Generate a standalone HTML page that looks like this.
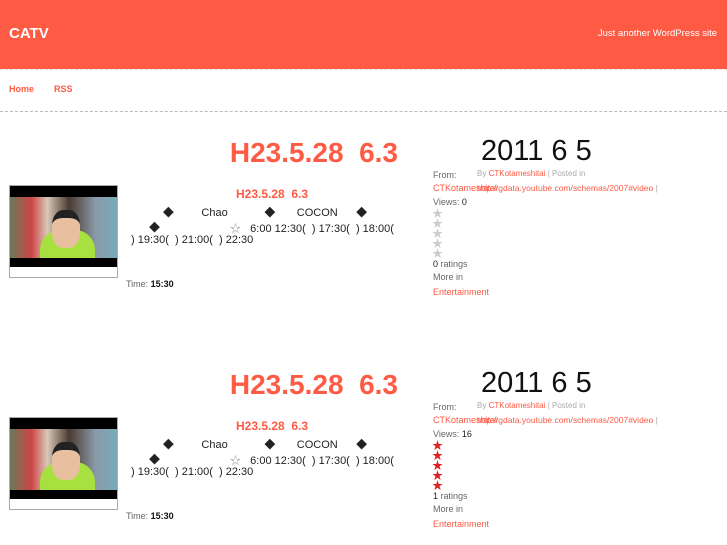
<!DOCTYPE html>
<html><head><meta charset="utf-8"><style>
*{margin:0;padding:0}
body{width:727px;height:545px;overflow:hidden;background:#fff;font-family:"Liberation Sans","Noto Sans CJK JP",sans-serif;position:relative}
.a{position:absolute;white-space:nowrap}
#hd{position:absolute;left:0;top:0;width:727px;height:69px;background:#ff5a43}
.dash{position:absolute;left:0;width:727px;border-top:1px dashed #bbb}
.r{color:#ff5a43}
.g{color:#666}
.thumb{position:absolute;left:9px;width:107px;height:91px;border:1px solid #aaa;background:#fff}
.thumb .bk{position:absolute;left:0;top:0;width:107px;height:81px;background:#000}
.thumb .im{position:absolute;left:0;top:11px;width:107px;height:61px;background:linear-gradient(90deg,#6a7a5a 0%,#c44 20%,#d8c8b8 35%,#4a3a30 55%,#8a9aa8 80%,#7ab 100%)}
.thumb .sh{position:absolute;left:30px;top:33px;width:55px;height:28px;background:#a8e040;border-radius:20px 20px 0 0}
.thumb .fc{position:absolute;left:42px;top:13px;width:28px;height:30px;background:#e8c0a0;border-radius:40%;border-top:8px solid #222}
.star{font-size:11px;line-height:10px;height:10px}
</style></head><body>
<div id="hd"></div>
<div class="a" style="left:9px;top:25px;color:#fff;font-size:15px;font-weight:bold">CATV</div>
<div class="a" style="right:10px;top:28px;color:#fff;font-size:9.5px">Just another WordPress site</div>
<div class="dash" style="top:69px;border-top-color:#ddd"></div>
<div class="a r" style="left:9px;top:84px;font-size:9px;font-weight:bold">Home</div>
<div class="a r" style="left:54px;top:84px;font-size:9px;font-weight:bold">RSS</div>
<div class="dash" style="top:111px"></div>

<div style="position:absolute;left:0;top:0;width:727px;height:300px">
<div class="a r" style="right:329px;top:137px;font-size:28px;font-weight:bold">H23.5.28&nbsp; 6.3</div>
<div class="thumb" style="top:185px"><div class="bk"></div><div class="im"><div class="sh"></div><div class="fc"></div></div></div>
<div class="a r" style="left:236px;top:187px;font-size:12px;font-weight:bold">H23.5.28&nbsp; 6.3</div>
<div class="a" style="left:130px;top:206px;font-size:11px;line-height:14px;width:270px;white-space:normal;text-align:center;color:#222">◆&nbsp;&nbsp;&nbsp;&nbsp;&nbsp;&nbsp;&nbsp;&nbsp;&nbsp;Chao&nbsp;&nbsp;&nbsp;&nbsp;&nbsp;&nbsp;&nbsp;&nbsp;&nbsp;&nbsp;&nbsp;&nbsp;◆&nbsp;&nbsp;&nbsp;&nbsp;&nbsp;&nbsp;&nbsp;COCON&nbsp;&nbsp;&nbsp;&nbsp;&nbsp;&nbsp;◆</div>
<div class="a" style="left:149px;top:219px;font-size:11px;color:#222">◆</div>
<div class="a" style="left:230px;top:220px;font-size:11px;color:#222"><span style="color:#999">☆</span>&nbsp;&nbsp;&nbsp;6:00 12:30(&nbsp; ) 17:30(&nbsp; ) 18:00(</div>
<div class="a" style="left:131px;top:234px;font-size:11px;color:#222">) 19:30(&nbsp; ) 21:00(&nbsp; ) 22:30</div>
<div class="a" style="left:126px;top:279px;font-size:9px;color:#666">Time: <b style="color:#111">15:30</b></div>
<div class="a" style="left:481px;top:135px;font-size:29px;color:#111">2011 6 5</div>
<div class="a g" style="left:433px;top:170px;font-size:9px">From:</div>
<div class="a" style="left:477px;top:169px;font-size:8px;color:#aaa">By <span class="r">CTKotameshitai</span> | Posted in</div>
<div class="a r" style="left:433px;top:183px;font-size:9px">CTKotameshitai</div>
<div class="a" style="left:477px;top:183px;font-size:8.5px;color:#aaa"><span class="r">http://gdata.youtube.com/schemas/2007#video</span> |</div>
<div class="a g" style="left:433px;top:197px;font-size:9px">Views: <span style="color:#222">0</span></div>
<div class="a star" style="left:432px;top:209px;color:#ccc">★<br>★<br>★<br>★<br>★</div>
<div class="a g" style="left:433px;top:259px;font-size:9px"><span style="color:#222">0</span> ratings</div>
<div class="a g" style="left:433px;top:272px;font-size:9px">More in</div>
<div class="a r" style="left:433px;top:287px;font-size:9px">Entertainment</div>
</div>

<div style="position:absolute;left:0;top:232px;width:727px;height:300px">
<div class="a r" style="right:329px;top:137px;font-size:28px;font-weight:bold">H23.5.28&nbsp; 6.3</div>
<div class="thumb" style="top:185px"><div class="bk"></div><div class="im"><div class="sh"></div><div class="fc"></div></div></div>
<div class="a r" style="left:236px;top:187px;font-size:12px;font-weight:bold">H23.5.28&nbsp; 6.3</div>
<div class="a" style="left:130px;top:206px;font-size:11px;line-height:14px;width:270px;white-space:normal;text-align:center;color:#222">◆&nbsp;&nbsp;&nbsp;&nbsp;&nbsp;&nbsp;&nbsp;&nbsp;&nbsp;Chao&nbsp;&nbsp;&nbsp;&nbsp;&nbsp;&nbsp;&nbsp;&nbsp;&nbsp;&nbsp;&nbsp;&nbsp;◆&nbsp;&nbsp;&nbsp;&nbsp;&nbsp;&nbsp;&nbsp;COCON&nbsp;&nbsp;&nbsp;&nbsp;&nbsp;&nbsp;◆</div>
<div class="a" style="left:149px;top:219px;font-size:11px;color:#222">◆</div>
<div class="a" style="left:230px;top:220px;font-size:11px;color:#222"><span style="color:#999">☆</span>&nbsp;&nbsp;&nbsp;6:00 12:30(&nbsp; ) 17:30(&nbsp; ) 18:00(</div>
<div class="a" style="left:131px;top:234px;font-size:11px;color:#222">) 19:30(&nbsp; ) 21:00(&nbsp; ) 22:30</div>
<div class="a" style="left:126px;top:279px;font-size:9px;color:#666">Time: <b style="color:#111">15:30</b></div>
<div class="a" style="left:481px;top:135px;font-size:29px;color:#111">2011 6 5</div>
<div class="a g" style="left:433px;top:170px;font-size:9px">From:</div>
<div class="a" style="left:477px;top:169px;font-size:8px;color:#aaa">By <span class="r">CTKotameshitai</span> | Posted in</div>
<div class="a r" style="left:433px;top:183px;font-size:9px">CTKotameshitai</div>
<div class="a" style="left:477px;top:183px;font-size:8.5px;color:#aaa"><span class="r">http://gdata.youtube.com/schemas/2007#video</span> |</div>
<div class="a g" style="left:433px;top:197px;font-size:9px">Views: <span style="color:#222">16</span></div>
<div class="a star" style="left:432px;top:209px;color:#e02020">★<br>★<br>★<br>★<br>★</div>
<div class="a g" style="left:433px;top:259px;font-size:9px"><span style="color:#222">1</span> ratings</div>
<div class="a g" style="left:433px;top:272px;font-size:9px">More in</div>
<div class="a r" style="left:433px;top:287px;font-size:9px">Entertainment</div>
</div>
</body></html>
